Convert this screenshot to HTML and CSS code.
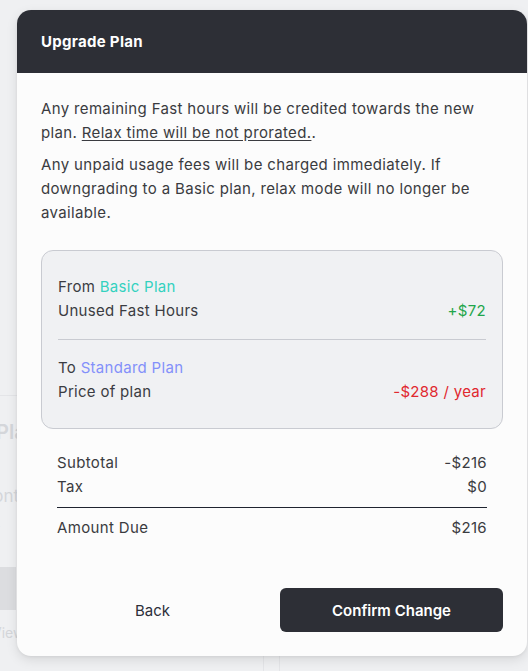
FILE: index.html
```html
<!DOCTYPE html>
<html lang="en">
<head>
<meta charset="utf-8">
<title>Upgrade Plan</title>
<link rel="stylesheet" href="styles.css">
</head>
<body>
<div class="page">
  <div class="bg-rule"></div>
  <div class="bg-text bg-title">Plan</div>
  <div class="bg-text bg-line1">Monthly</div>
  <div class="bg-text bg-line2">Yearly</div>
  <div class="bg-block"></div>
  <div class="bg-text bg-link">View</div>
  <div class="bg-col"></div>
</div>

<div class="modal" role="dialog" aria-labelledby="m-title">
  <header class="modal-head">
    <h2 id="m-title">Upgrade Plan</h2>
  </header>
  <div class="modal-body">
    <p class="note">Any remaining Fast hours will be credited towards the new plan. <u>Relax time will be not prorated.</u>.</p>
    <p class="note">Any unpaid usage fees will be charged immediately. If downgrading to a Basic plan, relax mode will no longer be available.</p>

    <div class="summary">
      <div class="sum-sec">
        <div>From <span class="basic">Basic Plan</span></div>
        <div class="row"><span>Unused Fast Hours</span><span class="pos">+$72</span></div>
      </div>
      <div class="sum-sec">
        <div>To <span class="std">Standard Plan</span></div>
        <div class="row"><span>Price of plan</span><span class="neg">-$288 / year</span></div>
      </div>
    </div>

    <div class="totals">
      <div class="row"><span>Subtotal</span><span>-$216</span></div>
      <div class="row"><span>Tax</span><span>$0</span></div>
      <div class="row due"><span>Amount Due</span><span>$216</span></div>
    </div>

    <div class="actions">
      <button class="btn btn-ghost">Back</button>
      <button class="btn btn-dark">Confirm Change</button>
    </div>
  </div>
</div>
</body>
</html>
```

FILE: styles.css
```css
* { box-sizing: border-box; }
html, body { margin: 0; padding: 0; }
body {
  width: 528px;
  height: 671px;
  overflow: hidden;
  background: #eff0f2;
  font-family: "Inter", "Lato", sans-serif;
  position: relative;
}

.page { position: relative; width: 528px; height: 671px; }
.bg-rule { position: absolute; left: 0; top: 395px; width: 60px; height: 1px; background: #e4e5e8; }
.bg-text { position: absolute; left: -4px; color: #d4d6da; font-family: "Inter", sans-serif; }
.bg-title { top: 420px; font-size: 20px; font-weight: 600; }
.bg-line1 { top: 486px; left: -22px; font-size: 17px; }
.bg-line2 { top: 520px; left: -50px; font-size: 17px; }
.bg-block { position: absolute; left: 0; top: 567px; width: 16px; height: 43px; background: #dcdde0; }
.bg-link { top: 624px; left: -8px; font-size: 14px; }
.bg-col { position: absolute; left: 263px; top: 640px; width: 17px; height: 31px; border-left: 1px solid #e4e5e8; border-right: 1px solid #e4e5e8; }

.modal {
  position: absolute;
  left: 17px;
  top: 10px;
  width: 510px;
  background: #fcfcfc;
  border-radius: 14px;
  overflow: hidden;
  box-shadow: 0 4px 12px rgba(0,0,0,0.10), 0 1px 3px rgba(0,0,0,0.06);
}
.modal-head {
  background: #2d2f36;
  height: 63px;
  display: flex;
  align-items: center;
  padding: 0 24px;
}
.modal-head h2 {
  margin: 0;
  color: #fff;
  font-size: 15px;
  font-weight: 700;
  letter-spacing: 0.3px;
}
.modal-body { padding: 24px 24px 24px; }
.note {
  margin: 0 0 8px;
  font-size: 15px;
  letter-spacing: 0.35px;
  line-height: 24px;
  color: #3a3b40;
}
.note u { text-underline-offset: 2px; }

.summary {
  margin-top: 25px;
  background: #f0f1f3;
  border: 1px solid #c9cbd1;
  border-radius: 12px;
  padding: 0 16px;
  font-family: "Inter", "Roboto", sans-serif;
  font-size: 15px;
  letter-spacing: 0.3px;
  line-height: 24px;
  color: #3b3c42;
}
.sum-sec { padding: 24px 0 16px; }
.sum-sec + .sum-sec { border-top: 1px solid #c9cbd1; padding: 16px 0 24px; }
.row { display: flex; justify-content: space-between; }
.basic { color: #34d1bf; }
.std { color: #8390fa; }
.pos { color: #1fa64b; }
.neg { color: #e0282e; }

.totals {
  margin: 22px 16px 0;
  font-size: 15px;
  letter-spacing: 0.35px;
  line-height: 24px;
  color: #3a3b40;
}
.totals .due {
  border-top: 1px solid #1f2430;
  margin-top: 8px;
  padding-top: 8px;
}

.actions {
  margin-top: 48px;
  display: grid;
  grid-template-columns: 1fr 1fr;
  gap: 16px;
}
.btn {
  height: 44px;
  border: 0;
  border-radius: 6px;
  font-family: inherit;
  font-size: 15px;
  cursor: pointer;
}
.btn-ghost { background: transparent; color: #2d2f3a; }
.btn-dark { background: #2d2f36; color: #fff; font-weight: 600; }
```
